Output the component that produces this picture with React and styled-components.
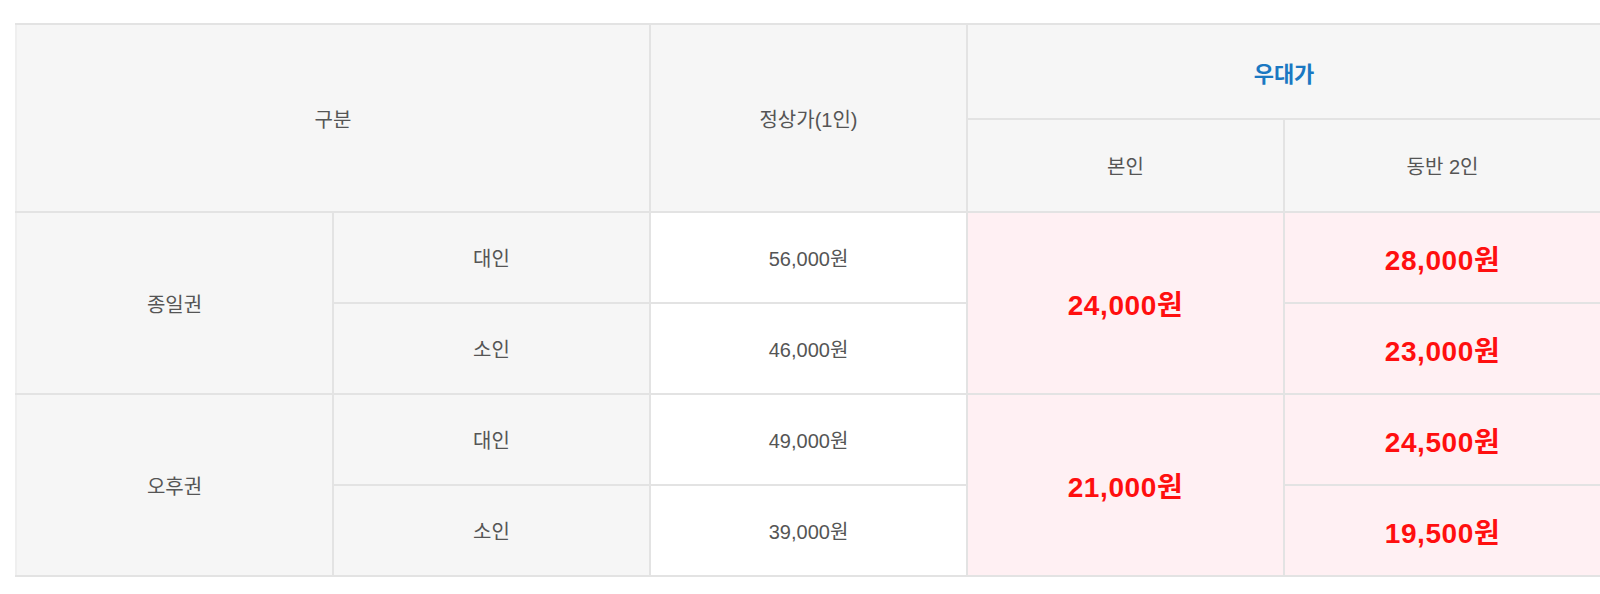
import React from "react";
import styled, { createGlobalStyle } from "styled-components";

const GlobalStyle = createGlobalStyle`
  body {
    margin: 0;
    background: #fff;
    font-family: "Liberation Sans", "Noto Sans CJK KR", sans-serif;
  }
`;

const Wrap = styled.div`
  padding: 23px 0 0 15px;
  overflow: hidden;
`;

const PriceTable = styled.table`
  width: 1585px;
  border-collapse: collapse;
  table-layout: fixed;
  font-size: 20px;
  color: #555;

  col {
    width: 317px;
  }

  tr > :first-child.edge {
    border-left-color: #efefef;
  }
`;

const tones = {
  head: "#f6f6f6",
  plain: "#ffffff",
  sale: "#fff0f3",
};

const HeadCell = styled.th`
  height: ${(p) => p.$h || 93}px;
  background: ${tones.head};
  border: 2px solid #e3e3e3;
  font-weight: ${(p) => (p.$accent ? 700 : 400)};
  font-size: ${(p) => (p.$accent ? 22 : 20)}px;
  color: ${(p) => (p.$accent ? "#1a78c2" : "#555")};
  text-align: center;
  vertical-align: middle;
  padding: 0;
`;

const Cell = styled.td`
  height: 89px;
  background: ${(p) => tones[p.$tone || "plain"]};
  border: 2px solid #e3e3e3;
  text-align: center;
  vertical-align: middle;
  padding: 0;
`;

const SalePrice = styled.span`
  color: #ff0f0f;
  font-weight: 700;
  font-size: 28px;
  letter-spacing: 0.6px;
`;

const groups = [
  {
    name: "종일권",
    own: "24,000원",
    rows: [
      { who: "대인", normal: "56,000원", pair: "28,000원" },
      { who: "소인", normal: "46,000원", pair: "23,000원" },
    ],
  },
  {
    name: "오후권",
    own: "21,000원",
    rows: [
      { who: "대인", normal: "49,000원", pair: "24,500원" },
      { who: "소인", normal: "39,000원", pair: "19,500원" },
    ],
  },
];

export default function App() {
  return (
    <>
      <GlobalStyle />
      <Wrap>
        <PriceTable>
          <colgroup>
            <col />
            <col />
            <col />
            <col />
            <col />
          </colgroup>
          <thead>
            <tr>
              <HeadCell className="edge" colSpan={2} rowSpan={2}>
                구분
              </HeadCell>
              <HeadCell rowSpan={2}>정상가(1인)</HeadCell>
              <HeadCell colSpan={2} $accent $h={93}>
                우대가
              </HeadCell>
            </tr>
            <tr>
              <HeadCell $h={91}>본인</HeadCell>
              <HeadCell $h={91}>동반 2인</HeadCell>
            </tr>
          </thead>
          <tbody>
            {groups.map((g) =>
              g.rows.map((r, i) => (
                <tr key={g.name + r.who}>
                  {i === 0 && (
                    <Cell className="edge" $tone="head" rowSpan={2}>
                      {g.name}
                    </Cell>
                  )}
                  <Cell $tone="head">{r.who}</Cell>
                  <Cell>{r.normal}</Cell>
                  {i === 0 && (
                    <Cell $tone="sale" rowSpan={2}>
                      <SalePrice>{g.own}</SalePrice>
                    </Cell>
                  )}
                  <Cell $tone="sale">
                    <SalePrice>{r.pair}</SalePrice>
                  </Cell>
                </tr>
              ))
            )}
          </tbody>
        </PriceTable>
      </Wrap>
    </>
  );
}
